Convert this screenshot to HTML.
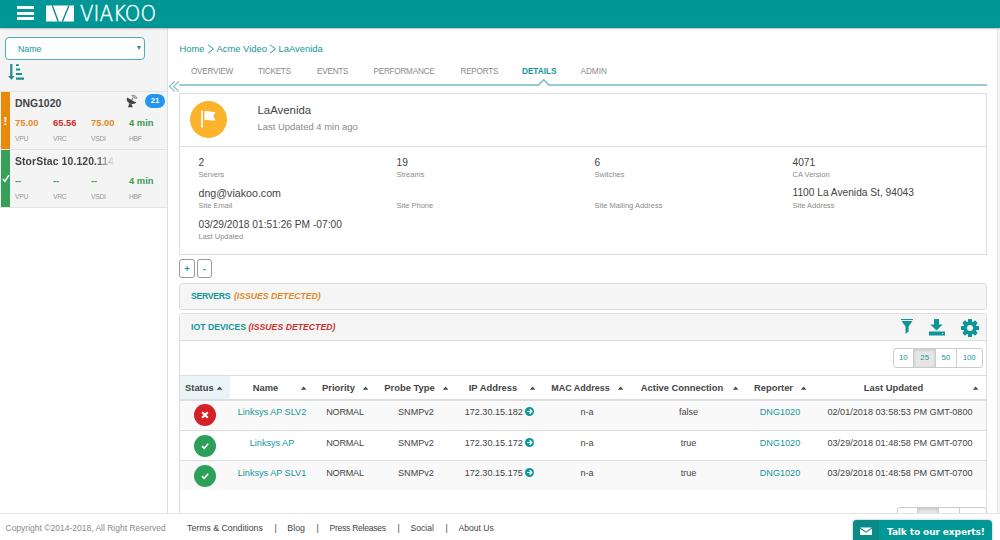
<!DOCTYPE html>
<html lang="en">
<head>
<meta charset="utf-8">
<title>Viakoo - LaAvenida</title>
<style>
*{box-sizing:border-box;margin:0;padding:0}
html,body{width:1000px;height:540px;overflow:hidden;background:#f5f5f5}
body{position:relative;font-family:"Liberation Sans",sans-serif;color:#444;font-size:11px}
.abs,.t{position:absolute;white-space:nowrap}
.t{line-height:1}
a{color:#12969a;text-decoration:none}
.teal{color:#12969a}
/* header */
#hdr{position:absolute;left:0;top:0;width:1000px;height:27.5px;background:#009796;border-bottom:1px solid #0b8a89;box-shadow:0 1px 1.5px rgba(0,0,0,.22);z-index:5}
#hdr .bar{position:absolute;left:17px;width:17px;height:3px;background:#fff}
/* sidebar */
#side{position:absolute;left:0;top:27px;width:168px;height:486px;background:#fff;border-right:1px solid #e0e0e0}
#sidetop{position:absolute;left:0;top:0;width:167px;height:65px;background:#f4f4f4}
#sel{position:absolute;left:5px;top:10px;width:140px;height:23px;border:1px solid #4eadae;border-radius:4px;background:#fff}
.item{position:absolute;left:0;width:167px;height:58px;background:#f4f4f4;border-top:1px solid #e2e2e2;border-bottom:1px solid #e2e2e2}
.item .stripe{position:absolute;left:1px;top:0;width:9px;height:57px}
.item .nm{font-weight:bold;font-size:10.4px;color:#444;left:15px;top:7px}
.item .v{font-weight:bold;font-size:9.4px;top:26.3px}
.item .l{font-size:6.8px;letter-spacing:-.3px;color:#999;top:44px}
.or{color:#e08a1e}.rd{color:#c9302c}.gr{color:#3a9a4f}
/* main */
#main{position:absolute;left:168px;top:29px;width:830px;height:484px;background:#fff;overflow:hidden;border-right:1px solid #e6e6e6}
.tab{font-size:8.2px;color:#8a8a8a;top:39px;letter-spacing:-.25px}
.card{position:absolute;border:1px solid #dedede;background:#fff}
.big{font-size:10.2px;color:#444}
.sm{font-size:7.5px;color:#8c8c8c}
.panelh{position:absolute;left:11px;width:808px;background:#f5f5f5;border:1px solid #dddddd;border-radius:3px}
.ph{font-size:8.7px;font-weight:bold;top:8.7px}
.ph i{font-weight:bold}
table{border-collapse:collapse;position:absolute;left:12px;top:346px;width:806px;table-layout:fixed}
th{height:24.5px;border-top:1px solid #ddd;border-bottom:2px solid #ddd;font-size:9.4px;font-weight:bold;color:#444;text-align:center;padding:0 18px 0 5px;position:relative;white-space:nowrap}
th:after{content:"";position:absolute;right:7.6px;top:10.4px;width:5.6px;height:3.3px;background:#4a4a4a;clip-path:polygon(50% 0,100% 100%,0 100%)}
.go{display:inline-block;margin-left:2.5px;vertical-align:-1.2px}
td{height:30px;border-top:1px solid #ddd;font-size:9.1px;color:#444;text-align:center;vertical-align:top;padding-top:7px;white-space:nowrap}
tr.r1 td{padding-top:5.5px}
tr.s td{background:#f9f9f9}
.st{display:inline-block;width:22px;height:22px;border-radius:11px;margin-top:-3px}
tr.r1 .st{margin-top:-2.3px}
.pg{position:absolute;display:flex;border:1px solid #ccc;border-radius:3px;overflow:hidden;background:#fff}
.pg span{display:block;height:18px;line-height:17.6px;text-align:center;font-size:7.8px;color:#12969a;border-right:1px solid #ccc}
.pg span:last-child{border-right:0}
.pg span.on{background:#e6e6e6;box-shadow:inset 0 1px 3px rgba(0,0,0,.15)}
/* footer */
#foot{position:absolute;left:0;top:513px;width:1000px;height:27px;background:#fff;border-top:1px solid #e4e4e4;z-index:4}
#foot .t{top:10px;font-size:8.6px}
#talk{position:absolute;left:853px;top:520px;width:139px;height:24px;background:#009796;border-radius:4px;z-index:6;box-shadow:0 0 3px rgba(0,0,0,.3)}
</style>
</head>
<body>

<div id="hdr">
  <div class="bar" style="top:6px"></div><div class="bar" style="top:11.5px"></div><div class="bar" style="top:17px"></div>
  <svg class="abs" style="left:0;top:0" width="170" height="27" viewBox="0 0 170 27">
    <rect x="46" y="5.5" width="28" height="16" fill="#fff"/>
    <path d="M52.3 5.5 L58.2 21.5 M69 5.5 L62.4 21.5" stroke="#008b8a" stroke-width="1.35" fill="none"/>
    <text x="80" y="21" font-family="'DejaVu Sans Light','DejaVu Sans',sans-serif" font-weight="200" font-size="21.3" fill="#fff" stroke="#fff" stroke-width="0.45" textLength="76" lengthAdjust="spacingAndGlyphs">VIAKOO</text>
  </svg>
</div>

<div id="side">
  <div id="sidetop">
    <div id="sel"><span class="t teal" style="left:12px;top:6.5px;font-size:8.8px">Name</span>
      <span class="abs" style="left:131px;top:8px;border:2.5px solid transparent;border-top:4px solid #1b8a8a;border-bottom:0"></span></div>
    <svg class="abs" style="left:8px;top:36px" width="18" height="18" viewBox="0 0 18 18">
      <path d="M2.2 1 H4.4 V13 H6.7 L3.4 16.7 L0.1 13 H2.2 Z M8 1.2 h2.8 v1.8 h-2.8 Z M8 5.5 h4.2 v2 h-4.2 Z M8 10 h6 v2 h-6 Z M8 14.5 h8 v2.3 h-8 Z" fill="#1a8f92"/>
    </svg>
  </div>

  <div class="item" style="top:64px;height:59px">
    <div class="stripe" style="background:#e8890c"></div>
    <span class="t" style="left:3.4px;top:23.5px;color:#fff;font-weight:bold;font-size:11.5px">!</span>
    <span class="t nm">DNG1020</span>
    <svg class="abs" style="left:126px;top:2px" width="13" height="14" viewBox="0 0 13 14">
      <path d="M1.2 3.4 C-0.9 8.6 5.6 12 10.4 8.7 Z" fill="#444"/>
      <path d="M2 13.2 H6.8 L5.3 9.6 L3.6 9 Z" fill="#444"/>
      <path d="M5.6 6.2 L7 3.8" stroke="#444" stroke-width="0.8"/>
      <path d="M5.6 1.6 C8.2 0.8 10.6 2.4 10.9 4.8 M6.2 3 C7.8 2.6 9.1 3.6 9.3 5" stroke="#999" stroke-width="1.25" fill="none"/>
    </svg>
    <span class="t" style="left:145px;top:2.3px;width:20px;height:13.5px;border-radius:7px;background:#2196f3;color:#fff;font-size:7.8px;font-weight:bold;text-align:center;line-height:13.5px">21</span>
    <span class="t v or" style="left:15px">75.00</span><span class="t v rd" style="left:53px">65.56</span><span class="t v or" style="left:91px">75.00</span><span class="t v gr" style="left:129px">4 min</span>
    <span class="t l" style="left:15px">VPU</span><span class="t l" style="left:53px">VRC</span><span class="t l" style="left:91px">VSDI</span><span class="t l" style="left:129px">HBF</span>
  </div>

  <div class="item" style="top:123px;border-top:0;height:58px">
    <div class="stripe" style="background:#36a058;height:57px"></div>
    <svg class="abs" style="left:2px;top:24px" width="8" height="9" viewBox="0 0 8 9"><path d="M0.8 5 L3 7.2 L7 1.2" stroke="#fff" stroke-width="1.5" fill="none"/></svg>
    <span class="t nm" style="width:100px;letter-spacing:.11px;overflow:hidden;-webkit-mask-image:linear-gradient(90deg,#000 80%,transparent 100%);mask-image:linear-gradient(90deg,#000 80%,transparent 100%)">StorStac 10.120.114</span>
    <span class="t v gr" style="left:15px">--</span><span class="t v gr" style="left:53px">--</span><span class="t v gr" style="left:91px">--</span><span class="t v gr" style="left:129px">4 min</span>
    <span class="t l" style="left:15px">VPU</span><span class="t l" style="left:53px">VRC</span><span class="t l" style="left:91px">VSDI</span><span class="t l" style="left:129px">HBF</span>
  </div>
</div>

<div id="main">
  <!-- breadcrumb -->
  <span class="t" style="left:11.5px;top:14.5px;font-size:9.4px"><a>Home</a></span>
  <svg class="abs" style="left:39px;top:15px" width="8" height="10" viewBox="0 0 8 10"><path d="M1 0.8 L6.5 5 L1 9.2" stroke="#12969a" stroke-width="0.9" fill="none"/></svg>
  <span class="t" style="left:48.5px;top:14.5px;font-size:9.4px"><a>Acme Video</a></span>
  <svg class="abs" style="left:101px;top:15px" width="8" height="10" viewBox="0 0 8 10"><path d="M1 0.8 L6.5 5 L1 9.2" stroke="#12969a" stroke-width="0.9" fill="none"/></svg>
  <span class="t" style="left:110.5px;top:14.5px;font-size:9.4px"><a>LaAvenida</a></span>

  <!-- tabs -->
  <span class="t tab" style="left:23px">OVERVIEW</span>
  <span class="t tab" style="left:90px">TICKETS</span>
  <span class="t tab" style="left:149px">EVENTS</span>
  <span class="t tab" style="left:205.5px">PERFORMANCE</span>
  <span class="t tab" style="left:292.5px">REPORTS</span>
  <span class="t tab" style="left:354px;color:#12969a;font-weight:bold;letter-spacing:0">DETAILS</span>
  <span class="t tab" style="left:412.5px;letter-spacing:0">ADMIN</span>
  <svg class="abs" style="left:0;top:48px" width="830" height="16" viewBox="0 0 830 16">
    <path d="M11.2 8 H370.5 L375.7 2.8 L381 8 H819" stroke="#72bfc3" stroke-width="1.5" fill="none"/>
    <path d="M6.7 4.5 L1.4 9.4 L6.7 14.3 M10.9 4.5 L5.6 9.4 L10.9 14.3" stroke="#7fbcbc" stroke-width="1.1" fill="none"/>
  </svg>

  <!-- site card -->
  <div class="card" style="left:11px;top:64px;width:808px;height:54px"></div>
  <div class="card" style="left:11px;top:117px;width:808px;height:109px"></div>
  <div class="abs" style="left:22px;top:72px;width:37px;height:37px;border-radius:50%;background:#fbb32c"></div>
  <svg class="abs" style="left:33px;top:81px" width="17" height="19" viewBox="0 -1 17 19">
    <path d="M1 -0.5 V16.5" stroke="#fff" stroke-width="1.8" fill="none"/>
    <path d="M3.5 0.3 C6.5 -0.6 9.5 1.6 14.6 0.9 L12.2 5 L14.6 9.4 C10 10.2 7 8.4 3.5 9.3 Z" fill="#fff"/>
  </svg>
  <span class="t" style="left:89.5px;top:75.5px;font-size:11.4px;color:#444">LaAvenida</span>
  <span class="t" style="left:89.5px;top:93px;font-size:9.46px;color:#8a8a8a">Last Updated 4 min ago</span>

  <span class="t big" style="left:30.5px;top:129px">2</span><span class="t sm" style="left:30.5px;top:142px">Servers</span>
  <span class="t big" style="left:228.5px;top:129px">19</span><span class="t sm" style="left:228.5px;top:142px">Streams</span>
  <span class="t big" style="left:426.5px;top:129px">6</span><span class="t sm" style="left:426.5px;top:142px">Switches</span>
  <span class="t big" style="left:624.5px;top:129px">4071</span><span class="t sm" style="left:624.5px;top:142px">CA Version</span>

  <span class="t big" style="left:30.5px;top:159px;font-size:10.66px">dng@viakoo.com</span><span class="t sm" style="left:30.5px;top:173px">Site Email</span>
  <span class="t sm" style="left:228.5px;top:173px">Site Phone</span>
  <span class="t sm" style="left:426.5px;top:173px">Site Mailing Address</span>
  <span class="t big" style="left:624.5px;top:159px">1100 La Avenida St, 94043</span><span class="t sm" style="left:624.5px;top:173px">Site Address</span>

  <span class="t big" style="left:30.5px;top:190.6px">03/29/2018 01:51:26 PM -07:00</span><span class="t sm" style="left:30.5px;top:203.5px">Last Updated</span>

  <!-- expand / collapse -->
  <span class="t teal" style="left:11px;top:229.5px;width:16px;height:19px;border:1px solid #9a9a9a;border-radius:3px;text-align:center;line-height:17px;font-size:9.5px;font-weight:bold">+</span>
  <span class="t teal" style="left:29px;top:229.5px;width:14.5px;height:19px;border:1px solid #9a9a9a;border-radius:3px;text-align:center;line-height:17px;font-size:9.5px;font-weight:bold">-</span>

  <!-- servers panel -->
  <div class="panelh" style="top:253.5px;height:27px">
    <span class="t ph teal" style="left:11px"><span style="letter-spacing:-.3px">SERVERS</span> <i class="or" style="margin-left:1.2px">(ISSUES DETECTED)</i></span>
  </div>
  <!-- iot panel -->
  <div class="panelh" style="top:284px;height:240px;background:#fff">
    <div class="abs" style="left:0;top:0;width:806px;height:27px;background:#f5f5f5;border-bottom:1px solid #ddd"></div>
    <span class="t ph teal" style="left:11px">IOT DEVICES <i class="rd">(ISSUES DETECTED)</i></span>
  </div>
  <!-- tool icons -->
  <svg class="abs" style="left:731px;top:289px" width="16" height="18" viewBox="0 0 16 18"><path d="M2 1 H14 V2 H2 Z M2.5 3 H13.5 L9.6 8.5 V13.4 L6.5 16 V8.5 Z" fill="#0d9599"/></svg>
  <svg class="abs" style="left:760px;top:289px" width="18" height="19" viewBox="0 0 18 19"><path d="M6 1 H11 V6.5 H14.6 L8.5 12.6 L2.4 6.5 H6 Z M1 13.5 H17 V17.6 H1 Z" fill="#0d9599"/><circle cx="14.6" cy="15.6" r="0.7" fill="#f5f5f5"/></svg>
  <svg class="abs" style="left:792px;top:288.75px" width="20" height="20" viewBox="-10 -10 20 20">
    <g fill="#0d9599"><circle r="6.7"/>
      <rect x="-2" y="-9" width="4" height="18" rx="0.5"/>
      <rect x="-2" y="-9" width="4" height="18" rx="0.5" transform="rotate(45)"/><rect x="-2" y="-9" width="4" height="18" rx="0.5" transform="rotate(90)"/><rect x="-2" y="-9" width="4" height="18" rx="0.5" transform="rotate(135)"/>
    </g><circle r="3" fill="#f5f5f5"/>
  </svg>

  <div class="pg" style="left:724.5px;top:319.3px;width:90px;height:19.4px">
    <span style="width:21px">10</span><span class="on" style="width:22px">25</span><span style="width:21px">50</span><span style="width:25px">100</span>
  </div>

  <table>
    <colgroup><col style="width:50px"><col style="width:84px"><col style="width:62px"><col style="width:80px"><col style="width:87px"><col style="width:88px"><col style="width:115px"><col style="width:68px"><col style="width:172px"></colgroup>
    <thead><tr>
      <th style="background:#e9f4f6">Status</th><th>Name</th><th>Priority</th><th>Probe Type</th><th>IP Address</th><th><span style="font-size:8.95px">MAC Address</span></th><th>Active Connection</th><th>Reporter</th><th>Last Updated</th>
    </tr></thead>
    <tbody>
      <tr class="s r1"><td><span class="st" style="background:#d42027"><svg width="22" height="22" viewBox="0 0 22 22"><path d="M8.2 8.2 L13.8 13.8 M13.8 8.2 L8.2 13.8" stroke="#fff" stroke-width="2.1"/></svg></span></td><td><a>Linksys AP SLV2</a></td><td style="letter-spacing:-.25px">NORMAL</td><td>SNMPv2</td><td>172.30.15.182<svg class="go" width="9" height="9" viewBox="0 0 9 9"><circle cx="4.5" cy="4.5" r="4.5" fill="#0d9599"/><path d="M2 4.5 H6.6 M4.6 2.3 L6.9 4.5 L4.6 6.7" stroke="#fff" stroke-width="1.2" fill="none"/></svg></td><td>n-a</td><td>false</td><td><a>DNG1020</a></td><td>02/01/2018 03:58:53 PM GMT-0800</td></tr>
      <tr><td><span class="st" style="background:#2ca058"><svg width="22" height="22" viewBox="0 0 22 22"><path d="M8 11.2 L10.2 13.3 L14.2 8.8" stroke="#fff" stroke-width="1.7" fill="none"/></svg></span></td><td><a>Linksys AP</a></td><td style="letter-spacing:-.25px">NORMAL</td><td>SNMPv2</td><td>172.30.15.172<svg class="go" width="9" height="9" viewBox="0 0 9 9"><circle cx="4.5" cy="4.5" r="4.5" fill="#0d9599"/><path d="M2 4.5 H6.6 M4.6 2.3 L6.9 4.5 L4.6 6.7" stroke="#fff" stroke-width="1.2" fill="none"/></svg></td><td>n-a</td><td>true</td><td><a>DNG1020</a></td><td>03/29/2018 01:48:58 PM GMT-0700</td></tr>
      <tr class="s"><td><span class="st" style="background:#2ca058"><svg width="22" height="22" viewBox="0 0 22 22"><path d="M8 11.2 L10.2 13.3 L14.2 8.8" stroke="#fff" stroke-width="1.7" fill="none"/></svg></span></td><td><a>Linksys AP SLV1</a></td><td style="letter-spacing:-.25px">NORMAL</td><td>SNMPv2</td><td>172.30.15.175<svg class="go" width="9" height="9" viewBox="0 0 9 9"><circle cx="4.5" cy="4.5" r="4.5" fill="#0d9599"/><path d="M2 4.5 H6.6 M4.6 2.3 L6.9 4.5 L4.6 6.7" stroke="#fff" stroke-width="1.2" fill="none"/></svg></td><td>n-a</td><td>true</td><td><a>DNG1020</a></td><td>03/29/2018 01:48:58 PM GMT-0700</td></tr>
    </tbody>
  </table>

  <div class="pg" style="left:728.5px;top:477.5px;width:90px;height:19px">
    <span style="width:21px"></span><span class="on" style="width:21.5px"></span><span style="width:21.5px"></span><span style="width:26px"></span>
  </div>
</div>

<div id="foot">
  <span class="t" style="left:5.5px;color:#8a8a8a;font-size:8.5px">Copyright ©2014-2018, All Right Reserved</span>
  <span class="t" style="left:187px;color:#444;font-size:8.75px">Terms &amp; Conditions</span>
  <span class="t" style="left:274.5px;color:#444">|</span>
  <span class="t" style="left:287.3px;color:#444;font-size:8.85px">Blog</span>
  <span class="t" style="left:316.5px;color:#444">|</span>
  <span class="t" style="left:329.5px;color:#444;letter-spacing:-.28px">Press Releases</span>
  <span class="t" style="left:397.5px;color:#444">|</span>
  <span class="t" style="left:410.5px;color:#444">Social</span>
  <span class="t" style="left:445.5px;color:#444">|</span>
  <span class="t" style="left:458.5px;color:#444">About Us</span>
</div>

<div id="talk">
  <div class="abs" style="left:0;top:0;width:26px;height:24px;background:#0a8a89;border-radius:4px 0 0 4px"></div>
  <svg class="abs" style="left:7px;top:7.4px" width="12" height="8" viewBox="0 0 13 10" preserveAspectRatio="none"><path d="M0 0.6 H13 L6.5 5.6 Z M0 2.2 L6.5 7.2 L13 2.2 V10 H0 Z" fill="#fff"/></svg>
  <span class="t" style="left:34px;top:7.7px;color:#fff;font-weight:bold;font-size:9px;letter-spacing:-.1px;font-family:'DejaVu Sans',sans-serif">Talk to our experts!</span>
</div>

</body>
</html>
